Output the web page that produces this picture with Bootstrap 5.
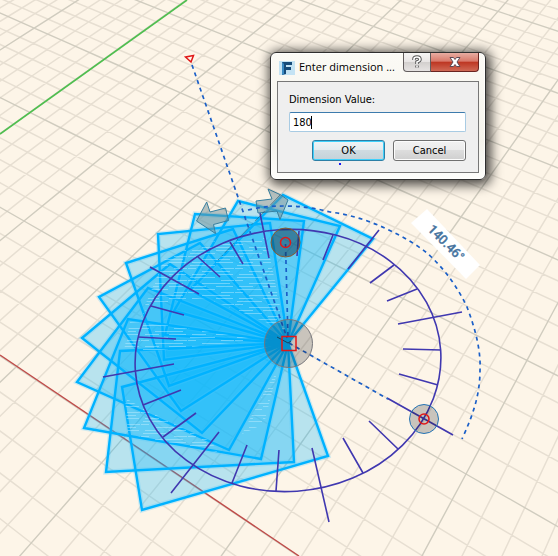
<!DOCTYPE html>
<html lang="en">
<head>
<meta charset="utf-8">
<meta name="viewport" content="width=device-width, initial-scale=1">
<title>Enter dimension value</title>
<link rel="stylesheet" href="https://cdn.jsdelivr.net/npm/bootstrap@5.3.0/dist/css/bootstrap.min.css">
<style>
body{background:#fdf5e8;font-family:"Open Sans","Noto Sans",sans-serif}
.scene{background:#fdf5e8}
.minor{stroke:#e7dfd2;stroke-width:1.5;fill:none}
.major{stroke:#d0ccbf;stroke-width:1.4;fill:none}
.sheet-fill{fill:#00b4ff;fill-opacity:.27}
.sheet-halo{fill:none;stroke:#4cc8ff;stroke-opacity:.25;stroke-width:5}
.sheet-edge{fill:none;stroke:#00b2ff;stroke-width:2.4}
.dial{fill:none;stroke:#4038b0;stroke-width:1.6}
.dashes{fill:none;stroke:#1a5fc8;stroke-width:1.7;stroke-dasharray:4 4}
.red-mark{fill:none;stroke:#e01818;stroke-width:1.5}
.angle-text{font:500 13px Roboto,sans-serif;fill:#46749f;stroke:#46749f;stroke-width:.3}
.win{left:270px;top:52px;width:216px;padding:0 6px 6px;border:1px solid #2e2e2e;border-radius:6px;background:linear-gradient(#fbfaf5,#f4f3ec 70%,#fdfdfb);box-shadow:0 0 0 1px #ffffffb0 inset,2px 2px 12px 3px #000000b8;color:#000}
.titlebar{height:28px;padding-left:2px}
.win-title{font-size:11px;line-height:28px;font-family:"Open Sans","Noto Sans",sans-serif}
.cap{height:19px;border:1px solid #625d5d;border-top:0;padding:0;line-height:0}
.cap-help{width:28px;border-bottom-left-radius:4px;background:linear-gradient(#f6f5f4,#e8e5e4 48%,#d2cfcd 50%,#e6e3e2)}
.cap-close{width:48px;border-left:0;border-color:#6a2420;border-bottom-right-radius:4px;background:linear-gradient(#e8ada2,#d8796a 46%,#bd3521 50%,#cf6955)}
.panel{border:1px solid #777;background:#efefef;padding:10px 12px 11px 11px;font-family:"DejaVu Sans Condensed","DejaVu Sans",sans-serif;font-size:11px;line-height:16px}
.value-box{height:20px;border:1px solid #a8cbe3;border-top-color:#3d7bad;border-radius:2px;padding:0 3px;background:#fff;font-size:11px;line-height:18px;outline:0;color:#000}
.caret{left:22px;top:4px;width:1px;height:13px;background:#000}
.push{width:73px;height:21px;border:1px solid #707070;border-radius:3px;padding:0;color:#000;line-height:18px;background:linear-gradient(#f2f2f2,#ebebeb 48%,#dddddd 50%,#cfcfcf);box-shadow:0 0 0 1px #fcfcfc inset}
.push-ok{position:relative;border-color:#2d7fa6;box-shadow:0 0 0 1px #3fd0fb inset;background:linear-gradient(#f0f4f6,#e4ebef 48%,#cfdbe1 50%,#c4d2d9)}
.push-ok::after{content:"";position:absolute;left:26px;top:22px;width:2px;height:2px;background:#1a1af0}
</style>
<script src="https://cdn.jsdelivr.net/npm/bootstrap@5.3.0/dist/js/bootstrap.bundle.min.js"></script>
</head>
<body class="m-0 overflow-hidden">
<main class="position-relative vh-100 overflow-hidden">
<svg class="scene d-block w-100 h-100" viewBox="0 0 558 556" preserveAspectRatio="xMinYMin slice" role="img" aria-label="Circular pattern sketch">
  <defs>
    <pattern id="glint" width="47" height="12" patternUnits="userSpaceOnUse">
      <path d="M2 1.5h25M33 4.5h13M0 4.5h8M14 7.5h28M4 10.5h14M28 10.5h17" stroke="#c9f0ff" stroke-width=".8" stroke-opacity=".55"/>
    </pattern>
  </defs>
  <g id="grid"></g>
  <path d="M0 134L187 0" stroke="#4fbf4f" stroke-width="1.6"/>
  <path d="M0 355L299 556" stroke="#c04a48" stroke-width="1.4"/>
  <g id="fan"></g>
  <path fill="url(#glint)" d="M165 258L202 243L226 240L266 238L285 330L206 298L150 304L138 322ZM130 322L165 325L260 340L160 350L124 350ZM125 398L150 412L212 442L217 452L175 444L128 434ZM242 434L268 385L277 372L264 424Z"/>
  <ellipse class="dial" cx="288" cy="360.5" rx="153" ry="131" transform="rotate(-4 288 360.5)"/>
  <path class="dial" d="M150 267L199 294M198 257L220 277M230 242L243 264M151 306L184 315M138 337L176 339M103 377L174 364M143 405L181 390M163 437L196 413M171 493L219 432M232 483L247 445M276 491L279 450M312 448L329 522M363 473L343 438M398 449L369 421M387 398L453 435M438 385L399 374M441 350L403 349M398 324L462 312M417 289L387 301M394 265L370 283M379 230L348 269M333 235L323 260M299 231L297 256M260 213L269 258"/>
  <g stroke="#387f9f" stroke-width="1" fill="#6f8d96" fill-opacity=".5" stroke-linejoin="round">
    <path d="M206.700 202L210 212L225.500 208L228.500 220.500L213.500 224.500L215.500 233.500L196.500 221Z"/>
    <path d="M268 189L281 195L288 200L280 219.500L277 211L258 213L256 201L272 199Z"/>
  </g>
  <path d="M280 195L218 260" stroke="#17435a" stroke-width=".8" stroke-opacity=".6" stroke-dasharray="14 3 2 3"/>
  <path class="dashes" d="M192 65L287 338M285.500 244L288 338M289 343L388 399M248 210C260 207 272 206 283 206C300 206 315 208 330 212C353 215 373 222 393 232C405 238 417 245 427 253C445 269 458 288 467 307C475 328 481 350 480 370C480 395 473 415 462 439"/>
  <circle cx="285.500" cy="242.500" r="14.500" fill="#10364e" fill-opacity=".5" stroke="#8b5a2e"/>
  <circle class="red-mark" cx="285.500" cy="242.500" r="5"/>
  <circle cx="288.500" cy="343.500" r="24" fill="#101820" fill-opacity=".22" stroke="#77777c"/>
  <path d="M277 337L288 343L291 341" fill="none" stroke="#17435a"/>
  <path class="red-mark" d="M282 336.500h14v14h-14z"/>
  <circle cx="424" cy="419" r="14.500" fill="#101820" fill-opacity=".22" stroke="#2474b5"/>
  <circle class="red-mark" cx="424" cy="419" r="5"/>
  <path class="red-mark" d="M185.500 57L193.500 55.500L191 62Z"/>
  <path d="M427 209L411 223L466 279L480 265Z" fill="#fff"/>
  <text class="angle-text" text-anchor="middle" transform="translate(443 246) rotate(45)">140.46°</text>
</svg>

<form class="win position-absolute" role="dialog" aria-labelledby="dlgTitle" onsubmit="return false">
  <header class="titlebar d-flex align-items-start">
    <svg class="mt-2 flex-shrink-0" width="16" height="14" viewBox="0 0 16 14" aria-hidden="true">
      <path d="M0 0h16v14H0z" fill="#c4e3f4"/><path d="M3 1h10v3H7v2h5v3H7v4L3 14z" fill="#164b7a"/><path d="M3 1l2 2v10l-2 1z" fill="#3b8bc4"/>
    </svg>
    <span id="dlgTitle" class="win-title ms-1 flex-grow-1 text-nowrap">Enter dimension ...</span>
    <button type="button" class="cap cap-help" aria-label="Help"><svg width="12" height="14" viewBox="0 0 12 14" fill="none"><path d="M3 5V4Q3 2 6 2Q9 2 9 4.500Q9 6 6 7V9M6 10.500V12.500" stroke="#555" stroke-width="3.500"/><path d="M3 5V4Q3 2 6 2Q9 2 9 4.500Q9 6 6 7V9M6 10.500V12.500" stroke="#fff" stroke-width="1.600"/></svg></button>
    <button type="button" class="cap cap-close" aria-label="Close"><svg width="14" height="12" viewBox="0 0 14 12"><path d="M2 1.500h3.500L7 3.500L8.500 1.500H12L9 6l3 4.500H8.500L7 8.500L5.500 10.500H2L5 6Z" fill="#fff" stroke="#5d4a55"/></svg></button>
  </header>
  <section class="panel">
    <label for="dim" class="d-block mb-1">Dimension Value:</label>
    <div class="position-relative">
      <input id="dim" type="text" class="value-box d-block w-100" value="180">
      <span class="caret position-absolute"></span>
    </div>
    <div class="d-flex justify-content-end gap-2 mt-2">
      <button type="submit" class="push push-ok">OK</button>
      <button type="button" class="push">Cancel</button>
    </div>
  </section>
</form>
</main>
<script>
const NS = 'http://www.w3.org/2000/svg';
const add = (parent, tag, attrs) => {
  const el = document.createElementNS(NS, tag);
  for (const k in attrs) el.setAttribute(k, attrs[k]);
  parent.appendChild(el);
};

// Ground plane: perspective map from the unit square to four screen points
const [p0, p1, p2, p3] = [[104, 59], [461, 217], [466 , 474], [24, 221]];
// plane coordinates of those points, in major cells: (0,0) (4,0) (5,2) (1,2)
const dx1 = p1[0]-p2[0], dx2 = p3[0]-p2[0], sx = p0[0]-p1[0]+p2[0]-p3[0];
const dy1 = p1[1]-p2[1], dy2 = p3[1]-p2[1], sy = p0[1]-p1[1]+p2[1]-p3[1];
const det = dx1*dy2 - dx2*dy1;
const g = (sx*dy2 - dx2*sy)/det, h = (dx1*sy - sx*dy1)/det;
const a = p1[0]-p0[0]+g*p1[0], b = p3[0]-p0[0]+h*p3[0];
const d = p1[1]-p0[1]+g*p1[1], e = p3[1]-p0[1]+h*p3[1];
function project(u, v) {
  const t = v/2, s = (u - t)/4, w = g*s + h*t + 1;
  return w > 0.02 ? [(a*s + b*t + p0[0])/w, (d*s + e*t + p0[1])/w] : null;
}
function gridLine(at) {
  const pts = [];
  for (let k = -15; k <= 15; k += 0.5) { const p = at(k); if (p) pts.push(p); }
  return 'M' + pts.map(p => p.map(n => n.toFixed(1)).join(' ')).join('L');
}
let minor = '', major = '';
for (let i = -40; i <= 55; i++) {
  const c = i/5, line = gridLine(k => project(c, k)) + gridLine(k => project(k, c));
  if (i % 5) minor += line; else major += line;
}
const grid = document.getElementById('grid');
add(grid, 'path', {class: 'minor', d: minor});
add(grid, 'path', {class: 'major', d: major});

// Patterned rectangles: near corner, outer corner, far corner; all share the hub
const hub = '288 343';
const sheets = [
  ['328 456','142 510','122 387'], ['294 462','106 472','120 351'], ['261 459','84 428','128 319'],
  ['229 450','77 382','148 288'], ['202 433','82 338','170 264'], ['181 411','99 297','200 243'],
  ['169 386','126 263','233 229'], ['164 360','158 234','270 223'], ['165 335','195 214','304 221'],
  ['174 311','238 201','340 226'], ['190 290','283 195','373 239']
].map(s => 'M' + hub + 'L' + s.join('L') + 'Z');
const fan = document.getElementById('fan');
for (const cls of ['sheet-fill', 'sheet-halo', 'sheet-edge'])
  for (const path of sheets) add(fan, 'path', {class: cls, d: path});
</script>
</body>
</html>
